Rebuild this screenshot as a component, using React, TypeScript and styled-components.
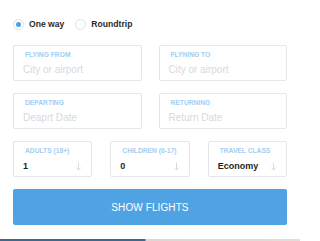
import React, { useState } from "react";
import styled, { createGlobalStyle } from "styled-components";

const GlobalStyle = createGlobalStyle`
  html, body {
    margin: 0;
    padding: 0;
    background: #ffffff;
    font-family: "Liberation Sans", Arial, sans-serif;
  }
`;

const Page = styled.div`
  width: 300px;
  overflow: hidden;
`;

const Form = styled.form`
  display: flex;
  flex-direction: column;
  gap: 12px;
  padding: 17px 13px 14px;
`;

const TripRow = styled.div`
  display: flex;
  align-items: center;
  gap: 11px;
  height: 14px;
  margin-bottom: 2px;
`;

const RadioLabel = styled.label`
  display: flex;
  align-items: center;
  gap: 5px;
  font-size: 8.6px;
  font-weight: 700;
  color: #2b2b2b;
  cursor: pointer;
`;

const RadioDot = styled.span<{ $checked: boolean }>`
  width: 11px;
  height: 11px;
  box-sizing: border-box;
  border-radius: 50%;
  border: 1px solid #dbe1e6;
  background: #fff;
  display: flex;
  align-items: center;
  justify-content: center;
  &::after {
    content: "";
    width: 5px;
    height: 5px;
    border-radius: 50%;
    background: ${(p) => (p.$checked ? "#4a9fe3" : "transparent")};
  }
`;

const Row = styled.div<{ $cols: number }>`
  display: grid;
  grid-template-columns: repeat(${(p) => p.$cols}, 1fr);
  column-gap: ${(p) => (p.$cols === 3 ? "18px" : "17px")};
`;

const FieldBox = styled.div`
  position: relative;
  height: 36px;
  box-sizing: border-box;
  border: 1px solid #e1e7ec;
  border-radius: 2px;
  padding: 4px 9px 0;
  display: flex;
  flex-direction: column;
`;

const FieldLabel = styled.span`
  font-size: 6.7px;
  line-height: 9px;
  font-weight: 700;
  color: #a3cdf1;
  margin-left: 2px;
  margin-bottom: 5px;
  white-space: nowrap;
`;

const Placeholder = styled.span`
  font-size: 10px;
  line-height: 12px;
  color: #d6dadd;
`;

const Value = styled.span`
  font-size: 9px;
  line-height: 12px;
  font-weight: 700;
  color: #1f1f1f;
`;

const Arrow = styled.svg`
  position: absolute;
  right: 9px;
  top: 20px;
`;

const SubmitButton = styled.button`
  height: 36px;
  border: none;
  border-radius: 2px;
  background: #50a3e3;
  color: #ffffff;
  font-family: "Liberation Sans", Arial, sans-serif;
  font-size: 10px;
  letter-spacing: 0.1px;
  cursor: pointer;
`;

const HeroStrip = styled.div`
  height: 40px;
  background: linear-gradient(
    to right,
    #41698f 0,
    #3d6891 145px,
    #dcd7d2 146px,
    #e2ddd8 100%
  );
`;

const DownArrow = () => (
  <Arrow width="7" height="9" viewBox="0 0 7 9">
    <path d="M3.5 0.5 V8 M1 5.5 L3.5 8 L6 5.5" stroke="#d2d6d9" strokeWidth="0.9" fill="none" />
  </Arrow>
);

const TextField = ({ label, placeholder }: { label: string; placeholder: string }) => (
  <FieldBox>
    <FieldLabel>{label}</FieldLabel>
    <Placeholder>{placeholder}</Placeholder>
  </FieldBox>
);

const SelectField = ({ label, value }: { label: string; value: string }) => (
  <FieldBox>
    <FieldLabel>{label}</FieldLabel>
    <Value>{value}</Value>
    <DownArrow />
  </FieldBox>
);

const App = () => {
  const [trip, setTrip] = useState<"oneway" | "round">("oneway");

  return (
    <Page>
      <GlobalStyle />
      <Form onSubmit={(e) => e.preventDefault()}>
        <TripRow>
          <RadioLabel onClick={() => setTrip("oneway")}>
            <RadioDot $checked={trip === "oneway"} />
            One way
          </RadioLabel>
          <RadioLabel onClick={() => setTrip("round")}>
            <RadioDot $checked={trip === "round"} />
            Roundtrip
          </RadioLabel>
        </TripRow>
        <Row $cols={2}>
          <TextField label="FLYING FROM" placeholder="City or airport" />
          <TextField label="FLYNING TO" placeholder="City or airport" />
        </Row>
        <Row $cols={2}>
          <TextField label="DEPARTING" placeholder="Deaprt Date" />
          <TextField label="RETURNING" placeholder="Return Date" />
        </Row>
        <Row $cols={3}>
          <SelectField label="ADULTS (18+)" value="1" />
          <SelectField label="CHILDREN (0-17)" value="0" />
          <SelectField label="TRAVEL CLASS" value="Economy" />
        </Row>
        <SubmitButton type="submit">SHOW FLIGHTS</SubmitButton>
      </Form>
      <HeroStrip />
    </Page>
  );
};

export default App;
